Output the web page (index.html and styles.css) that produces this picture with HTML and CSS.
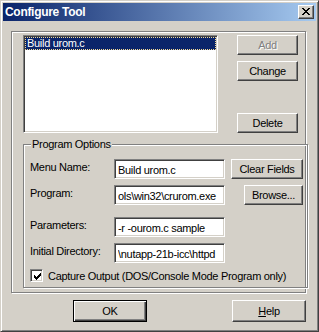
FILE: index.html
```html
<!DOCTYPE html>
<html>
<head>
<meta charset="utf-8">
<title>Configure Tool</title>
<link rel="stylesheet" href="styles.css">
</head>
<body>
<div class="dialog">
    <div class="caption">
        <span class="caption-text">Configure Tool</span>
        <div class="close-btn">
            <svg width="8" height="7" viewBox="0 0 8 7" shape-rendering="crispEdges"><path d="M0 0h2v1h-2z M6 0h2v1h-2z M1 1h2v1h-2z M5 1h2v1h-2z M2 2h4v1h-4z M3 3h2v1h-2z M2 4h4v1h-4z M1 5h2v1h-2z M5 5h2v1h-2z M0 6h2v1h-2z M6 6h2v1h-2z" fill="#000"/></svg>
        </div>
    </div>
    <div class="client">
        <div class="frame">
            <div class="tools">
                <div class="listbox">
                    <div class="item selected">Build urom.c</div>
                </div>
                <div class="tool-buttons">
                    <button class="btn disabled">Add</button>
                    <button class="btn">Change</button>
                    <button class="btn btn-delete">Delete</button>
                </div>
            </div>
            <fieldset class="group">
                <legend>Program Options</legend>
                <div class="fields">
                    <label>Menu Name:</label>
                    <input class="edit" type="text" value="Build urom.c">
                    <button class="btn btn-clear">Clear Fields</button>

                    <label>Program:</label>
                    <input class="edit" type="text" value="ols\win32\crurom.exe">
                    <button class="btn btn-browse">Browse...</button>

                    <label class="spaced">Parameters:</label>
                    <input class="edit spaced" type="text" value="-r -ourom.c sample">
                    <span></span>

                    <label>Initial Directory:</label>
                    <input class="edit" type="text" value="\nutapp-21b-icc\httpd">
                    <span></span>
                </div>
                <div class="check-row">
                    <span class="checkbox">
                        <svg width="7" height="7" viewBox="0 0 7 7" shape-rendering="crispEdges"><path d="M6 0h1v1h-1z M5 1h2v1h-2z M0 2h1v1h-1z M4 2h3v1h-3z M0 3h2v1h-2z M3 3h3v1h-3z M0 4h5v1h-5z M1 5h3v1h-3z M2 6h1v1h-1z" fill="#000"/></svg>
                    </span>
                    <span>Capture Output (DOS/Console Mode Program only)</span>
                </div>
            </fieldset>
        </div>
        <div class="actions">
            <button class="btn btn-wide default">OK</button>
            <button class="btn btn-wide"><u>H</u>elp</button>
        </div>
    </div>
</div>
</body>
</html>
```

FILE: styles.css
```css
body{
    margin: 0;
    padding: 0;
    background: #d4d0c8;
    font-family: "Liberation Sans", Arial, sans-serif;
    font-size: 11px;
    letter-spacing: -0.3px;
    color: #000000;
}
.dialog{
    width: 319px;
    height: 332px;
    box-sizing: border-box;
    padding: 2px;
    background: #d4d0c8;
    border: 1px solid;
    border-color: #d4d0c8 #404040 #404040 #d4d0c8;
    box-shadow: inset 1px 1px #ffffff, inset -1px -1px #808080;
}

/* title bar */
.caption{
    height: 18px;
    display: flex;
    align-items: center;
    justify-content: space-between;
    padding: 0 2px;
    background: linear-gradient(to right, #0a246a, #a6caf0);
}
.caption-text{
    color: #ffffff;
    font-weight: bold;
    font-size: 12px;
    letter-spacing: -0.3px;
}
.close-btn{
    width: 16px;
    height: 14px;
    box-sizing: border-box;
    display: flex;
    justify-content: center;
    align-items: flex-start;
    padding-top: 2px;
    padding-right: 1px;
    background: #d4d0c8;
    border: 1px solid;
    border-color: #ffffff #404040 #404040 #ffffff;
    box-shadow: inset -1px -1px #808080;
}
.close-btn svg{ display: block; }

/* content */
.client{
    padding: 10px 10px 0 8px;
}
.frame{
    box-sizing: border-box;
    width: 295px;
    padding: 3px 7px 4px 11px;
    border: 1px solid #808080;
    box-shadow: inset 1px 1px #ffffff, 1px 1px #ffffff;
}
.tools{
    display: flex;
    gap: 19px;
}
.listbox, .edit, .checkbox{
    box-sizing: border-box;
    background: #ffffff;
    border: 1px solid;
    border-color: #808080 #ffffff #ffffff #808080;
    box-shadow: inset 1px 1px #404040, inset -1px -1px #d4d0c8;
}
.listbox{
    width: 195px;
    height: 98px;
    padding: 1px;
}
.item{
    height: 13px;
    line-height: 11px;
    padding-left: 1px;
    border: 1px solid transparent;
    box-sizing: border-box;
}
.item.selected{
    background: #0a246a;
    color: #ffffff;
    border: 1px dotted #f5db95;
}
.tool-buttons{
    width: 61px;
    display: flex;
    flex-direction: column;
    gap: 6px;
}
.btn{
    box-sizing: border-box;
    height: 20px;
    padding: 0;
    font-family: "Liberation Sans", Arial, sans-serif;
    font-size: 11px;
    letter-spacing: -0.3px;
    color: #000000;
    background: #d4d0c8;
    border: 1px solid;
    border-color: #ffffff #404040 #404040 #ffffff;
    box-shadow: inset -1px -1px #808080;
}
.btn.disabled{
    color: #808080;
    text-shadow: 1px 1px #ffffff;
}
.btn-delete{ margin-top: 26px; }

/* program options */
.group{
    box-sizing: border-box;
    width: 279px;
    margin: 5px 0 0 0;
    padding: 8px 4px 5px 6px;
    border: 1px solid #808080;
    box-shadow: inset 1px 1px #ffffff, 1px 1px #ffffff;
}
.group legend{
    margin-left: 1px;
    padding: 0 1px;
    line-height: 13px;
    background: #d4d0c8;
}
.fields{
    display: grid;
    grid-template-columns: 78px 111px 72px;
    column-gap: 6px;
    row-gap: 6px;
}
.fields label{
    padding-top: 2px;
    line-height: 13px;
    white-space: nowrap;
}
.fields .spaced{ margin-top: 6px; }
.edit{
    height: 20px;
    width: 111px;
    margin: 0;
    padding: 1px 2px 0 3px;
    font-family: "Liberation Sans", Arial, sans-serif;
    font-size: 11px;
    letter-spacing: -0.3px;
    color: #000000;
    outline: none;
}
.btn-clear{ width: 72px; }
.btn-browse{
    width: 59px;
    justify-self: end;
}
.check-row{
    display: flex;
    align-items: center;
    gap: 5px;
    margin-top: 6px;
    height: 13px;
}
.checkbox{
    width: 13px;
    height: 13px;
    padding: 3px;
}
.checkbox svg{ display: block; }

/* bottom buttons */
.actions{
    display: flex;
    gap: 85px;
    margin-top: 7px;
    padding-left: 62px;
}
.btn-wide{
    width: 75px;
    height: 22px;
}
.btn.default{
    border: 1px solid #000000;
    box-shadow: inset 1px 1px #ffffff, inset -1px -1px #404040, inset -2px -2px #808080;
}
```
